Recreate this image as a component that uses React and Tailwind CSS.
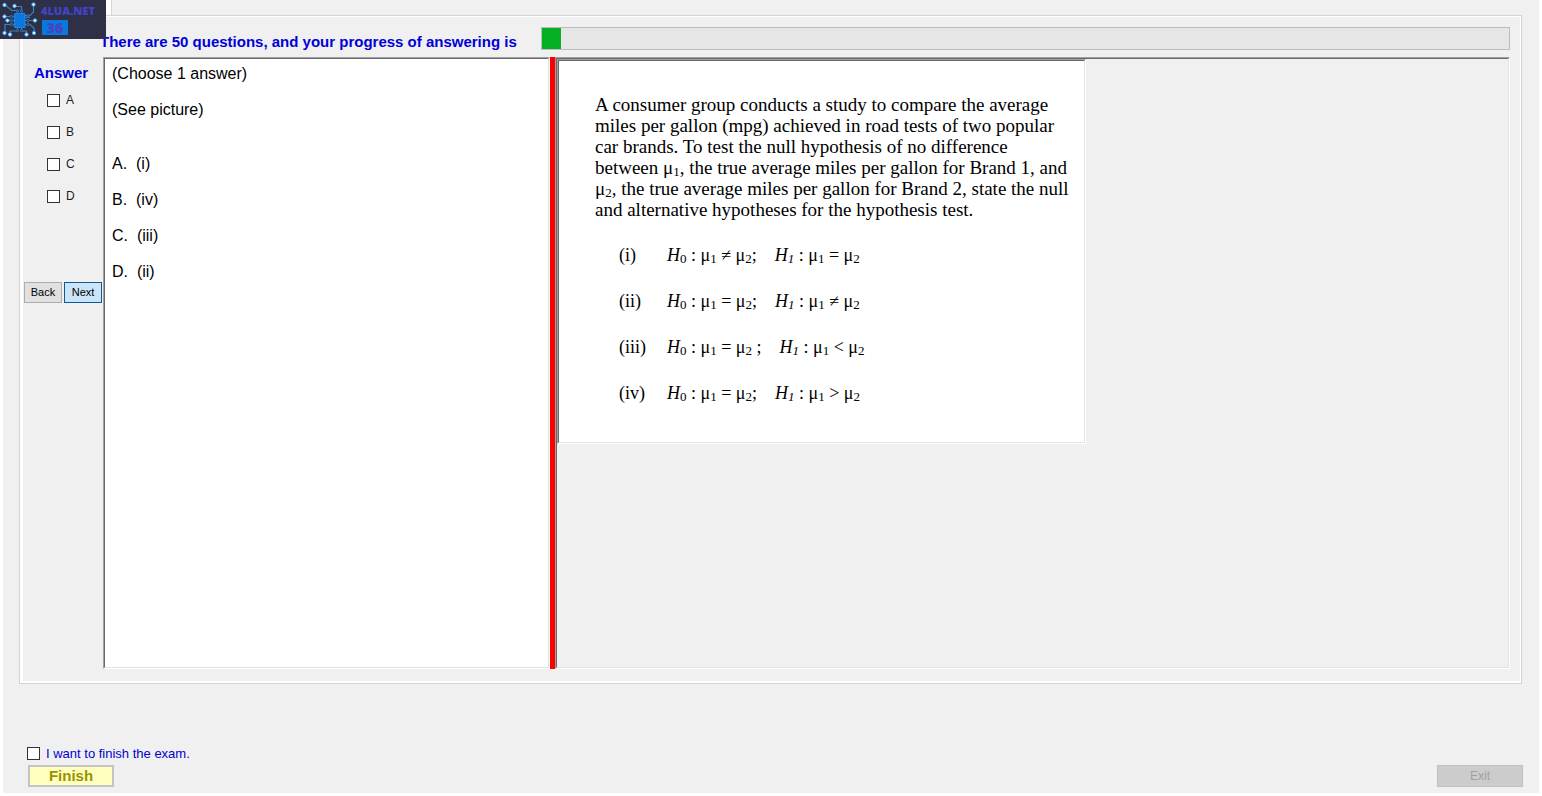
import React from "react";

const SANS = "font-['Liberation_Sans',Arial,sans-serif]";
const SERIF = "font-['Liberation_Serif','Times_New_Roman',serif]";

function Sunken({ className = "", innerClassName = "", children }) {
  return (
    <div className={"flex border border-t-[#a0a0a0] border-l-[#a0a0a0] border-r-white border-b-white " + className}>
      <div className={"min-w-0 flex-1 border border-t-[#696969] border-l-[#696969] border-r-[#e3e3e3] border-b-[#e3e3e3] " + innerClassName}>
        {children}
      </div>
    </div>
  );
}

function Tick({ id }) {
  return (
    <input
      id={id}
      type="checkbox"
      className="size-[13px] shrink-0 appearance-none border border-[#333333] bg-white checked:bg-[#333333]"
    />
  );
}

function Sub({ italic, children }) {
  return <sub className={"bottom-[-2px] text-[13px] leading-none " + (italic ? "italic" : "")}>{children}</sub>;
}

function Mu({ n }) {
  return (
    <>
      μ<Sub>{n}</Sub>
    </>
  );
}

const HYPOTHESES = [
  { mark: "(i)", h0: "≠", end: ";", h1: "=" },
  { mark: "(ii)", h0: "=", end: ";", h1: "≠" },
  { mark: "(iii)", h0: "=", end: " ;", h1: "<" },
  { mark: "(iv)", h0: "=", end: ";", h1: ">" },
];

const CHOICES = [
  ["A.", "(i)"],
  ["B.", "(iv)"],
  ["C.", "(iii)"],
  ["D.", "(ii)"],
];

function Logo() {
  return (
    <div className="absolute top-0 left-0 flex h-[39px] w-[106px] bg-[#2d3047]">
      <svg viewBox="0 0 40 39" className="h-[39px] w-[40px] shrink-0" fill="none" stroke="#3a80ba" strokeWidth="1.2">
        <rect x="14.5" y="13.5" width="10.500" height="14" rx="1" fill="#0b78e0" stroke="#1b86e6" />
        <path d="M17.500 13V10.500H12L5 5M21.500 13V6.500H14.500M25 15.500H30L33.500 12V5M14 16.500H5M14 20.500H7.500M14 24.500H5V33M25 20.500H35M25 17.500H30M25 24.500H30L34 28V33M17.500 28V31H10V34M21.500 28V31H26.500V34" />
        <g fill="#2d3047" stroke="#3a80ba" strokeWidth="0.9">
          <circle cx="17.500" cy="11" r="1.200" />
          <circle cx="21.500" cy="11" r="1.200" />
          <circle cx="11.500" cy="16.500" r="1.200" />
          <circle cx="11.500" cy="20.500" r="1.200" />
          <circle cx="11.500" cy="24.500" r="1.200" />
          <circle cx="28" cy="16" r="1.200" />
          <circle cx="28" cy="20.500" r="1.200" />
          <circle cx="28" cy="24.500" r="1.200" />
          <circle cx="17.500" cy="30.500" r="1.200" />
          <circle cx="21.500" cy="30.500" r="1.200" />
        </g>
        <g fill="#e6f5ff" stroke="#3fa0ea" strokeWidth="1">
          <circle cx="4.500" cy="5" r="1.700" />
          <circle cx="14.500" cy="6" r="1.700" />
          <circle cx="33.500" cy="4.500" r="1.700" />
          <circle cx="4.500" cy="16.500" r="1.700" />
          <circle cx="7.500" cy="20.500" r="1.700" />
          <circle cx="35" cy="20.500" r="1.700" />
          <circle cx="4.500" cy="33" r="1.700" />
          <circle cx="10" cy="34.500" r="1.700" />
          <circle cx="26.500" cy="34.500" r="1.700" />
          <circle cx="34" cy="33" r="1.700" />
        </g>
      </svg>
      <div className="ml-px flex flex-col items-start pt-[4px] font-['Open_Sans',sans-serif] font-extrabold text-[#4543c4]">
        <span className="text-[11px] leading-[14px]">4LUA.NET</span>
        <span className="mt-[2px] ml-px h-[15px] w-[26px] bg-[#0a78dc] text-center text-[14px] leading-[15px]">36</span>
      </div>
    </div>
  );
}

export default function App() {
  return (
    <div className={"relative min-h-screen bg-white px-[3px] pb-[3px] text-black " + SANS}>
      <div className="flex min-h-[calc(100vh-3px)] flex-col bg-[#f0f0f0]">
        <div className="flex h-[15px] bg-white">
          <div className="ml-[108px] flex-1 border-l border-[#d5d5d5] bg-[#f0f0f0]" />
        </div>

        <main className="mr-[17px] ml-[16px] flex flex-1 border border-[#d5d5d5]">
          <div className="flex min-w-0 flex-1 flex-col border-t border-r border-b-2 border-l-[3px] border-white pr-[10px] pb-[12px]">
            <header className="flex items-center pt-[10px]">
              <p id="progress-text" className="ml-[77px] w-[441px] shrink-0 pt-[7px] text-[15px] leading-[16px] font-bold whitespace-nowrap text-[#0000d8]">
                There are 50 questions, and your progress of answering is
              </p>
              <div
                role="progressbar"
                aria-labelledby="progress-text"
                aria-valuenow={2}
                className="h-[23px] flex-1 border border-[#bcbcbc] bg-[#e6e6e6]"
              >
                <div className="h-full w-[2%] bg-[#06b025]" />
              </div>
            </header>

            <div className="mt-[7px] flex flex-1">
              <aside className="w-[80px] shrink-0 pt-[8px]">
                <h2 className="ml-[11px] text-[15px] leading-[16px] font-bold text-[#0000d8]">Answer</h2>
                <div className="mt-[3px] ml-[24px]">
                  {["A", "B", "C", "D"].map((l) => (
                    <div key={l} className="flex h-[32px] items-center gap-[6px]">
                      <Tick id={"answer-" + l} />
                      <label htmlFor={"answer-" + l} className="text-[12px] leading-[14px] text-[#222222]">
                        {l}
                      </label>
                    </div>
                  ))}
                </div>
                <div className="mt-[70px] flex gap-[2px] pl-px text-[11px]">
                  <button type="button" className="h-[21px] w-[38px] border border-[#adadad] bg-[#e1e1e1]">Back</button>
                  <button type="button" className="h-[21px] w-[38px] border border-[#0a5a9c] bg-[#cce4f7]">Next</button>
                </div>
              </aside>

              <Sunken className="w-[447px] shrink-0" innerClassName="bg-white px-[7px] pt-[6px] text-[16px] leading-[18px]">
                <p>(Choose 1 answer)</p>
                <p className="mt-[18px]">(See picture)</p>
                <ul className="mt-[36px] flex flex-col gap-[18px]">
                  {CHOICES.map(([letter, text]) => (
                    <li key={letter} className="whitespace-pre">{letter + "  " + text}</li>
                  ))}
                </ul>
              </Sunken>

              <div className="w-[5px] shrink-0 bg-[#fb0000]" />

              <Sunken className="min-w-0 flex-1" innerClassName="flex items-start">
                <Sunken className="h-[385px] w-[529px]" innerClassName={"bg-white pt-[33px] pl-[36px] leading-[21px] " + SERIF}>
                  <p className="text-[19px] leading-[21px] whitespace-nowrap">
                    A consumer group conducts a study to compare the average<br />
                    miles per gallon (mpg) achieved in road tests of two popular<br />
                    car brands. To test the null hypothesis of no difference<br />
                    between <Mu n="1" />, the true average miles per gallon for Brand 1, and<br />
                    <Mu n="2" />, the true average miles per gallon for Brand 2, state the null<br />
                    and alternative hypotheses for the hypothesis test.
                  </p>
                  <ol className="mt-[25px] ml-[24px] flex flex-col gap-[25px] text-[18px] leading-[21px]">
                    {HYPOTHESES.map((h) => (
                      <li key={h.mark} className="flex whitespace-pre">
                        <span className="w-[48px]">{h.mark}</span>
                        <span className="mr-[18px]">
                          <i>H</i><Sub>0</Sub> : <Mu n="1" />{" " + h.h0 + " "}<Mu n="2" />{h.end}
                        </span>
                        <span>
                          <i>H</i><Sub italic>1</Sub> : <Mu n="1" />{" " + h.h1 + " "}<Mu n="2" />
                        </span>
                      </li>
                    ))}
                  </ol>
                </Sunken>
              </Sunken>
            </div>
          </div>
        </main>

        <footer className="flex items-end justify-between pt-[60px] pr-[16px] pb-[6px] pl-[24px]">
          <div>
            <div className="flex items-center gap-[6px]">
              <Tick id="finish-check" />
              <label htmlFor="finish-check" className="pt-[2px] text-[13px] leading-[16px] text-[#0000d0]">
                I want to finish the exam.
              </label>
            </div>
            <button
              type="button"
              className="mt-[3px] ml-px block h-[22px] w-[86px] border-2 border-[#c4c4c4] bg-[#ffffc0] text-[15px] leading-[18px] font-bold text-[#949400]"
            >
              Finish
            </button>
          </div>
          <button type="button" disabled className="h-[22px] w-[86px] border border-[#bfbfbf] bg-[#cccccc] text-[12px] text-[#a0a0a0]">
            Exit
          </button>
        </footer>
      </div>
      <Logo />
    </div>
  );
}
